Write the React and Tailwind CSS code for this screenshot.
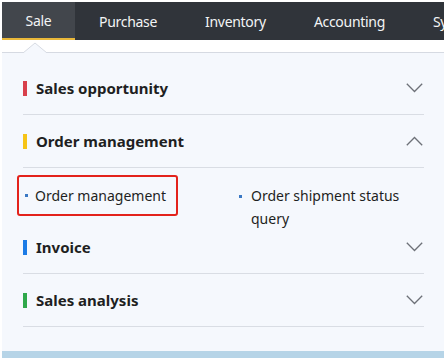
const tabs = ["Purchase", "Inventory", "Accounting", "Sy"];

function Chevron({ up }) {
  return (
    <svg width="17" height="10" viewBox="0 0 17 10" fill="none" className="text-[#6d7178]">
      <path
        d={up ? "M0.8 9.2L8.5 1.5L16.2 9.2" : "M0.8 0.8L8.5 8.5L16.2 0.8"}
        stroke="currentColor"
        strokeWidth="1.3"
      />
    </svg>
  );
}

function Header({ color, title, open }) {
  return (
    <div className="flex items-center justify-between h-[53px] border-b border-[#d9dde4]">
      <div className="flex items-center">
        <span className={`w-[4px] h-[15px] ${color}`} />
        <span className="ml-[9px] text-[15px] font-bold text-[#1e1f22]">{title}</span>
      </div>
      <div className="mr-[1px]">
        <Chevron up={open} />
      </div>
    </div>
  );
}

export default function App() {
  return (
    <div
      className="w-[448px] h-[359px] bg-white overflow-hidden pt-[2px] pl-[2px] pr-[4px]"
      style={{ fontFamily: '"Noto Sans", "Open Sans", sans-serif' }}
    >
      {/* top nav */}
      <nav className="flex h-[38px] bg-[#30343a] text-[#f3f4f5] text-[14px] tracking-[-0.3px] whitespace-nowrap overflow-hidden">
        <div className="w-[73px] shrink-0 flex items-center justify-center bg-[#42464c] border-b-2 border-[#e9b83a]">
          Sale
        </div>
        {tabs.map((t) => (
          <div key={t} className="shrink-0 flex items-center px-[24px]">
            {t}
          </div>
        ))}
      </nav>

      {/* caret strip */}
      <div className="relative h-[13px] bg-white border-b border-[#d6dae2]">
        <svg className="absolute left-[21px] top-[2px]" width="26" height="11" viewBox="0 0 26 11">
          <path d="M0 11L12 1L24 11Z" fill="#f5f8fd" />
          <path d="M0 11L12 1L24 11" fill="none" stroke="#d6dae2" strokeWidth="1" />
        </svg>
      </div>

      {/* panel */}
      <div className="bg-[#f5f8fd] pt-[9px] pb-[24px] pl-[21px] pr-[20px]">
        <Header color="bg-[#d8404c]" title="Sales opportunity" />
        <Header color="bg-[#f6c417]" title="Order management" open />

        <div className="flex h-[53px] text-[14px] text-[#1e1f22]">
          <div className="w-[216px] pt-[7px]">
            <div className="ml-[-6px] w-[161px] h-[41px] flex items-center pl-[6px] border-2 border-[#e3221c] rounded-[3px]">
              <span className="w-[3px] h-[3px] bg-[#3a78c4]" />
              <span className="ml-[7px]">Order management</span>
            </div>
          </div>
          <div className="flex items-start pt-[16px]">
            <span className="w-[3px] h-[3px] bg-[#3a78c4] mt-[11px]" />
            <span className="ml-[9px] w-[160px] leading-[23px]">Order shipment status query</span>
          </div>
        </div>

        <Header color="bg-[#1c7be6]" title="Invoice" />
        <Header color="bg-[#2fa84b]" title="Sales analysis" />
      </div>

      <div className="h-[7px] bg-[#b6d4e7]" />
    </div>
  );
}
